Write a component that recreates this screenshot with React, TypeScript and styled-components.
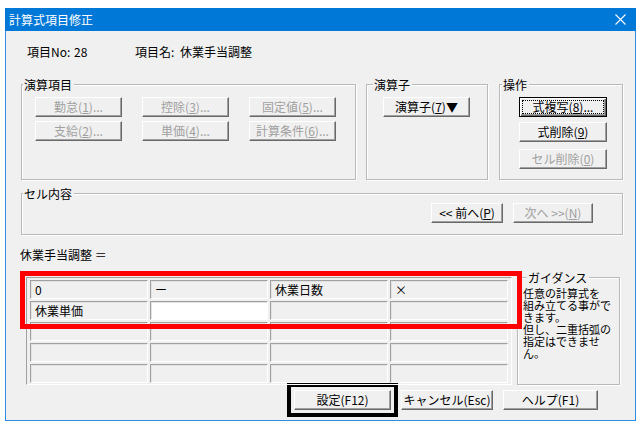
import styled, { createGlobalStyle, css } from "styled-components";

const GlobalStyle = createGlobalStyle`
  html, body {
    margin: 0;
    padding: 0;
    background: #ffffff;
  }
  body {
    font-family: "Noto Sans CJK JP", "Noto Sans", sans-serif;
    font-size: 12px;
    color: #000000;
  }
`;

const uiGray = "#f0f0f0";

const Window = styled.div`
  box-sizing: border-box;
  margin: 8px 0 0 5px;
  width: 631px;
  height: 413px;
  border: 1px solid #2f8ce0;
  background: ${uiGray};
  display: flex;
  flex-direction: column;
`;

const TitleBar = styled.div`
  height: 23px;
  background: #0078d7;
  display: flex;
  align-items: center;
  justify-content: space-between;
  padding: 0 10px 0 4px;
  margin: -1px -1px 0;
`;

const Title = styled.span`
  color: #ffffff;
  font-size: 12px;
  line-height: 14px;
`;

const Body = styled.div`
  padding: 0 12px 0 15px;
  display: flex;
  flex-direction: column;
`;

const Header = styled.div`
  box-sizing: border-box;
  height: 35px;
  padding: 6px 0 0 6px;
  display: grid;
  grid-template-columns: 47px 61px 45px auto;
  align-items: center;
  line-height: 14px;
`;

const GroupRow = styled.div`
  margin-top: 18px;
  display: flex;
  gap: 10px;
`;

const Group = styled.div<{ $w: number; $h: number; $pad?: string }>`
  position: relative;
  box-sizing: border-box;
  width: ${(p) => p.$w}px;
  height: ${(p) => p.$h}px;
  border: 1px solid #b9b9b9;
  box-shadow: inset 1px 1px 0 #ffffff, 1px 1px 0 #ffffff;
  padding: ${(p) => p.$pad ?? "0"};
  flex-shrink: 0;
`;

const Caption = styled.span<{ $left?: number }>`
  position: absolute;
  top: -7px;
  left: ${(p) => p.$left ?? 1}px;
  padding: 0 2px 0 1px;
  background: ${uiGray};
  line-height: 14px;
`;

const ButtonGrid = styled.div`
  display: grid;
  grid-template-columns: repeat(3, 87px);
  grid-auto-rows: 20px;
  column-gap: 20px;
  row-gap: 4px;
`;

const ButtonStack = styled.div`
  display: flex;
  flex-direction: column;
  gap: 5px;
  & > :last-child {
    margin-top: 2px;
  }
`;

const Button = styled.button<{ $w?: number; $default?: boolean; $marked?: boolean }>`
  box-sizing: border-box;
  width: ${(p) => p.$w ?? 87}px;
  height: 20px;
  padding: 0;
  margin: 0;
  font-family: inherit;
  font-size: 12px;
  line-height: 14px;
  color: #000000;
  background: ${uiGray};
  border: 1px solid;
  border-color: #ffffff #696969 #696969 #ffffff;
  box-shadow: inset -1px -1px 0 #a0a0a0;
  white-space: nowrap;
  text-align: center;
  &:disabled {
    color: #a0a0a0;
  }
  ${(p) =>
    p.$default &&
    css`
      outline: 1px dotted #000000;
      outline-offset: -4px;
      border-color: #000000;
      box-shadow: inset 1px 1px 0 #ffffff, inset -1px -1px 0 #696969, inset -2px -2px 0 #a0a0a0;
    `}
  ${(p) =>
    p.$marked &&
    css`
      outline: 4px solid #000000;
      outline-offset: 3px;
    `}
`;

const CellGroupBody = styled.div`
  display: flex;
  justify-content: flex-end;
  gap: 10px;
  padding: 9px 29px 0 0;
`;

const FormulaLabel = styled.div`
  margin-top: 13px;
  line-height: 14px;
  margin-left: -1px;
`;

const FormulaArea = styled.div`
  position: relative;
  display: flex;
  gap: 5px;
  padding: 15px 0 0 5px;
`;

const Sheet = styled.div`
  box-sizing: border-box;
  width: 486px;
  height: 108px;
  border: 1px solid;
  border-color: #a0a0a0 #ffffff #ffffff #a0a0a0;
  padding: 2px 3px 1px;
  display: grid;
  grid-template-columns: repeat(4, 1fr);
  grid-auto-rows: 19px;
  gap: 2px;
`;

const Cell = styled.div<{ $white?: boolean }>`
  box-sizing: border-box;
  border: 1px solid;
  border-color: #a0a0a0 #ffffff #ffffff #a0a0a0;
  box-shadow: inset 1px 1px 0 #e3e3e3;
  background: ${(p) => (p.$white ? "#ffffff" : uiGray)};
  padding: 0 4px;
  line-height: 17px;
  font-size: 12px;
  white-space: nowrap;
  overflow: hidden;
`;

const GuidanceText = styled.div`
  padding: 9px 0 0 5px;
  font-size: 11px;
  line-height: 12px;
  white-space: nowrap;
`;

const Highlight = styled.div`
  position: absolute;
  left: -1px;
  top: 9px;
  width: 502px;
  height: 58px;
  box-sizing: border-box;
  border: 5px solid #ff0000;
  pointer-events: none;
`;

const Footer = styled.div`
  margin-top: 5px;
  display: flex;
  gap: 10px;
  padding-left: 273px;
`;

const CloseIcon = () => (
  <svg width="11" height="11" viewBox="0 0 11 11">
    <path d="M0.5 0.5 L10.5 10.5 M10.5 0.5 L0.5 10.5" stroke="#ffffff" strokeWidth="1.1" />
  </svg>
);

const calcButtons = [
  ["勤怠", "1"],
  ["控除", "3"],
  ["固定値", "5"],
  ["支給", "2"],
  ["単価", "4"],
  ["計算条件", "6"],
];

const cells: { text: string; white?: boolean }[][] = [
  [{ text: "0" }, { text: "ー" }, { text: "休業日数" }, { text: "×" }],
  [{ text: "休業単価" }, { text: "", white: true }, { text: "" }, { text: "" }],
  [{ text: "" }, { text: "" }, { text: "" }, { text: "" }],
  [{ text: "" }, { text: "" }, { text: "" }, { text: "" }],
  [{ text: "" }, { text: "" }, { text: "" }, { text: "" }],
];

const guidance = ["任意の計算式を", "組み立てる事がで", "きます。", "但し、二重括弧の", "指定はできませ", "ん。"];

export default function App() {
  return (
    <>
      <GlobalStyle />
      <Window>
        <TitleBar>
          <Title>計算式項目修正</Title>
          <CloseIcon />
        </TitleBar>
        <Body>
          <Header>
            <span>項目No:</span>
            <span>28</span>
            <span>項目名:</span>
            <span>休業手当調整</span>
          </Header>

          <GroupRow>
            <Group $w={335} $h={96} $pad="12px 0 0 13px">
              <Caption>演算項目</Caption>
              <ButtonGrid>
                {calcButtons.map(([label, key]) => (
                  <Button key={key} disabled>
                    {label}(<u>{key}</u>)...
                  </Button>
                ))}
              </ButtonGrid>
            </Group>
            <Group $w={122} $h={96} $pad="12px 0 0 16px">
              <Caption $left={6}>演算子</Caption>
              <Button>
                演算子(<u>7</u>)▼
              </Button>
            </Group>
            <Group $w={124} $h={96} $pad="12px 0 0 19px" style={{ marginLeft: 1 }}>
              <Caption $left={2}>操作</Caption>
              <ButtonStack>
                <Button $w={88} $default>
                  式複写(<u>8</u>)...
                </Button>
                <Button $w={88}>
                  式削除(<u>9</u>)
                </Button>
                <Button $w={88} disabled>
                  セル削除(<u>0</u>)
                </Button>
              </ButtonStack>
            </Group>
          </GroupRow>

          <Group $w={602} $h={42} style={{ marginTop: 13 }}>
            <Caption>セル内容</Caption>
            <CellGroupBody>
              <Button $w={72}>
                &lt;&lt; 前へ(<u>P</u>)
              </Button>
              <Button $w={80} disabled>
                次へ &gt;&gt;(<u>N</u>)
              </Button>
            </CellGroupBody>
          </Group>

          <FormulaLabel>休業手当調整 ＝</FormulaLabel>

          <FormulaArea>
            <Sheet>
              {cells.flat().map((c, i) => (
                <Cell key={i} $white={c.white}>
                  {c.text}
                </Cell>
              ))}
            </Sheet>
            <Group $w={103} $h={108}>
              <Caption $left={9}>ガイダンス</Caption>
              <GuidanceText>
                {guidance.map((line) => (
                  <div key={line}>{line}</div>
                ))}
              </GuidanceText>
            </Group>
            <Highlight />
          </FormulaArea>

          <Footer>
            <Button $w={97} $marked>
              設定(F12)
            </Button>
            <Button $w={92}>キャンセル(Esc)</Button>
            <Button $w={95}>ヘルプ(F1)</Button>
          </Footer>
        </Body>
      </Window>
    </>
  );
}
